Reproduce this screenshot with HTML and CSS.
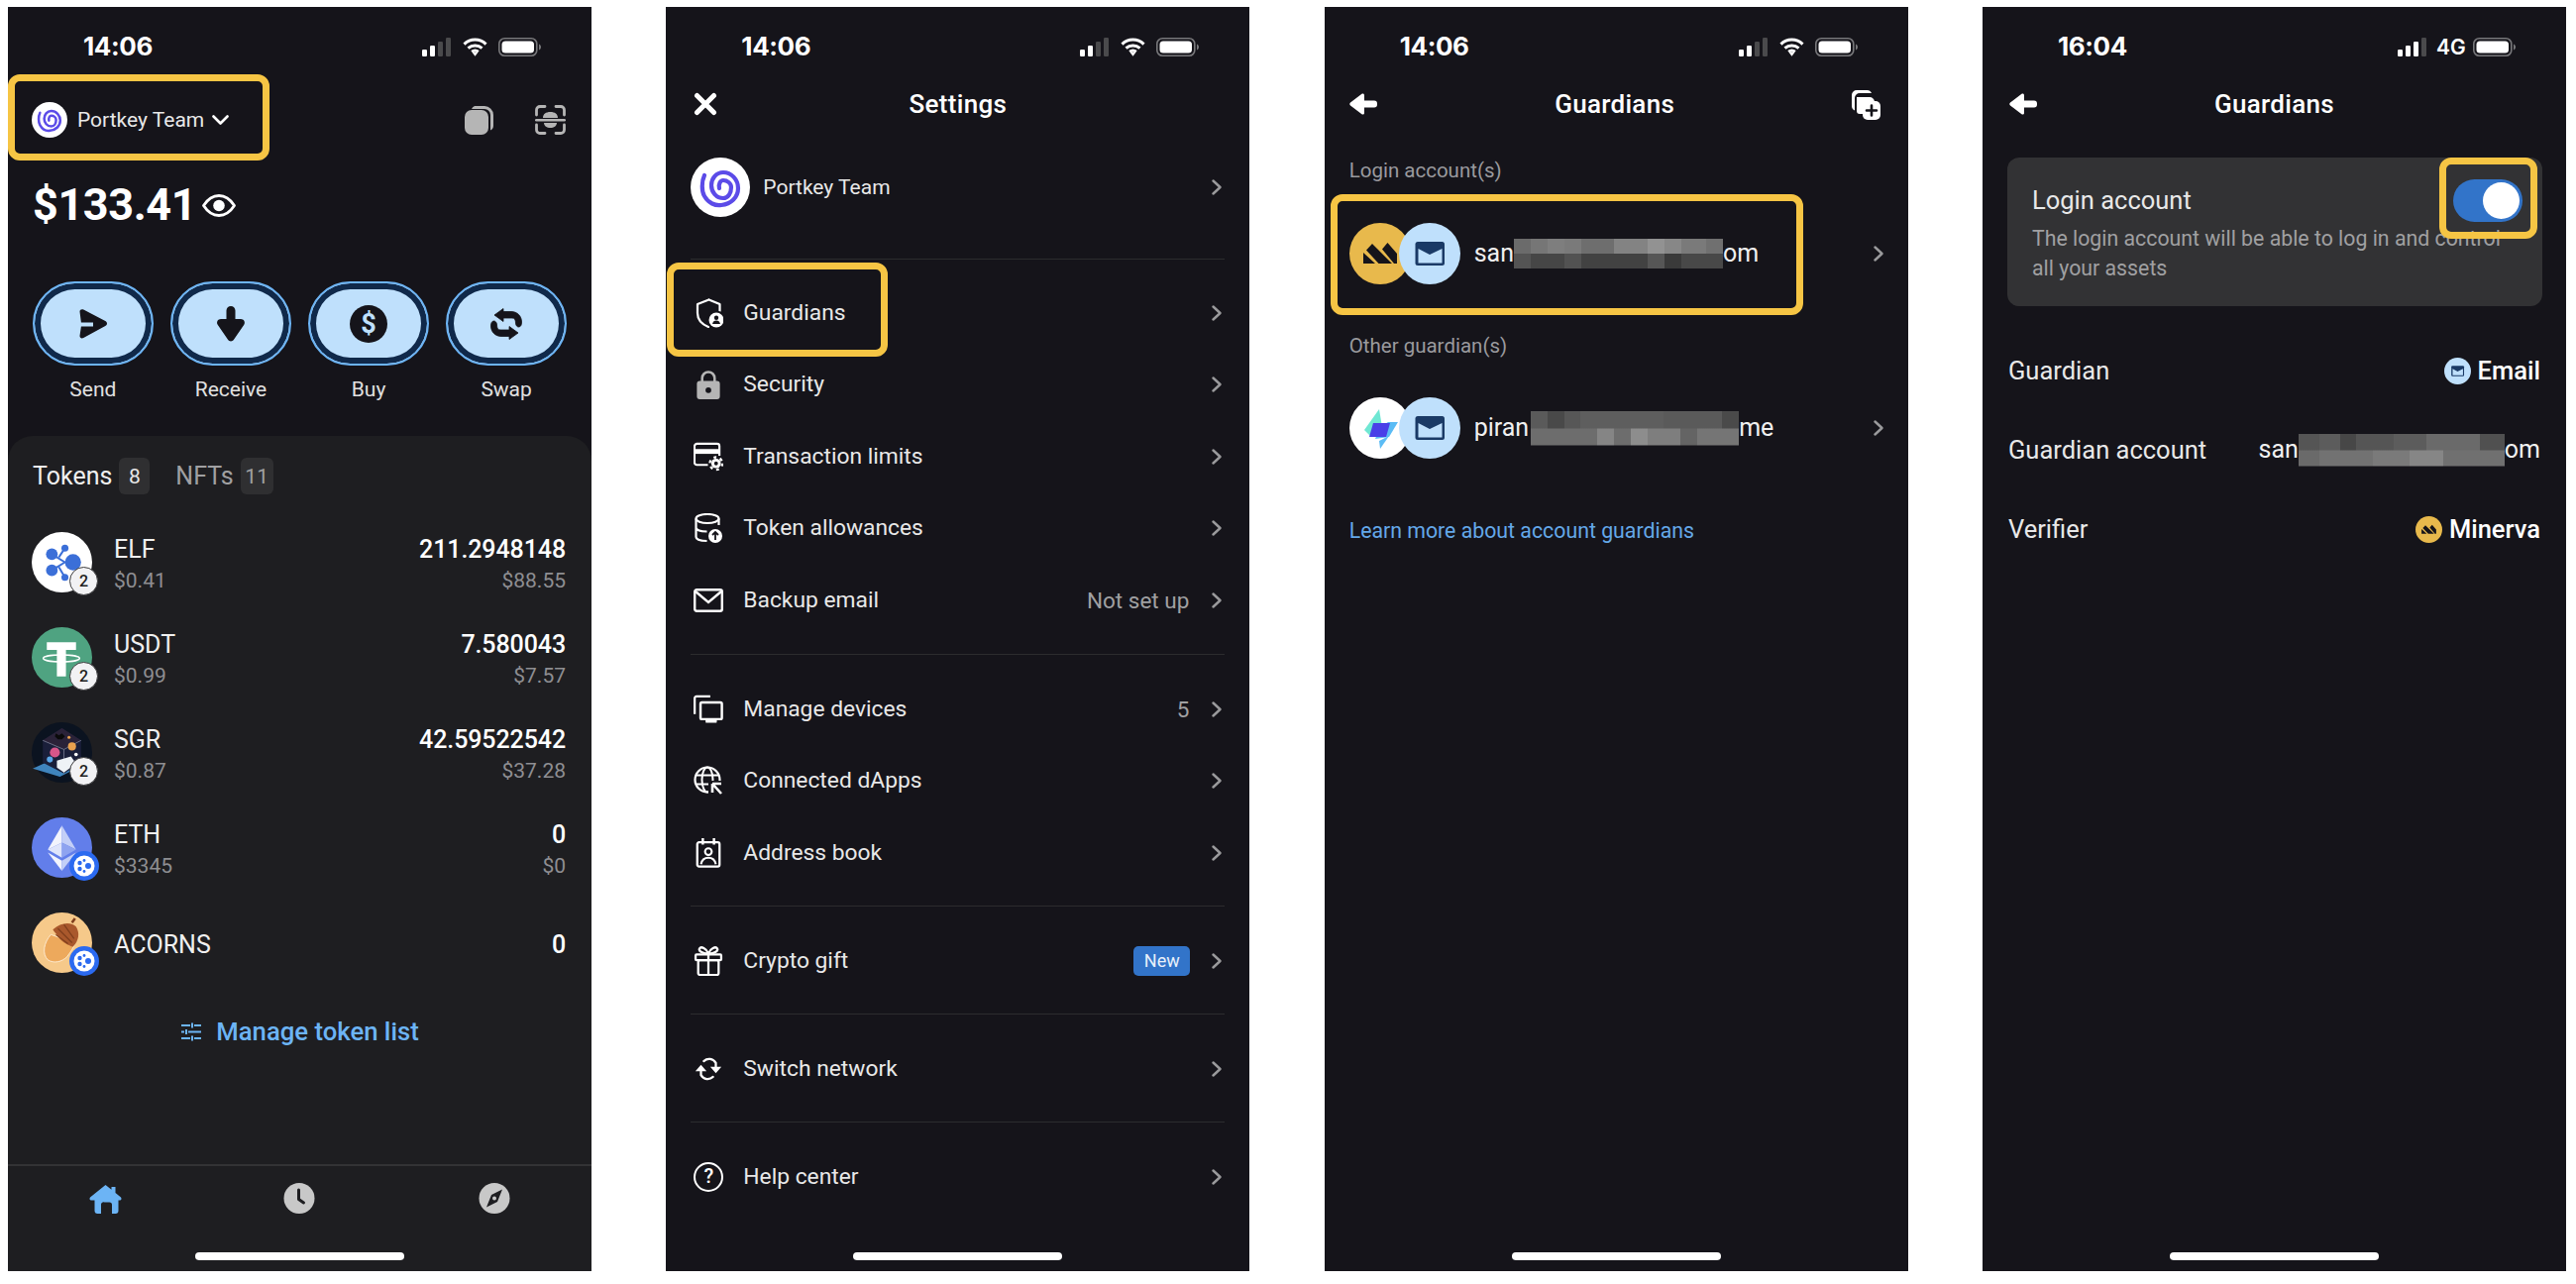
FILE: index.html
```html
<!DOCTYPE html>
<html lang="en">
<head>
<meta charset="utf-8">
<title>Portkey guardians walkthrough</title>
<link rel="stylesheet" href="styles.css">
</head>
<body>
<svg class="defs" aria-hidden="true">
  <symbol id="sig2" viewBox="0 0 29 19"><rect x="0" y="12" width="5" height="7" rx="1.2" fill="#fff"/><rect x="8" y="8" width="5" height="11" rx="1.2" fill="#fff"/><rect x="16" y="4" width="5" height="15" rx="1.2" fill="#4a4a4c"/><rect x="24" y="0" width="5" height="19" rx="1.2" fill="#4a4a4c"/></symbol>
  <symbol id="sig3" viewBox="0 0 29 19"><rect x="0" y="12" width="5" height="7" rx="1.2" fill="#fff"/><rect x="8" y="8" width="5" height="11" rx="1.2" fill="#fff"/><rect x="16" y="4" width="5" height="15" rx="1.2" fill="#fff"/><rect x="24" y="0" width="5" height="19" rx="1.2" fill="#4a4a4c"/></symbol>
  <symbol id="wifi" viewBox="0 0 25 19"><path d="M1.5 6.6C7.5 .6 17.5 .6 23.5 6.6M5.5 10.6c4-3.6 10-3.6 14 0M9.2 14.2c2-1.5 4.6-1.5 6.6 0" fill="none" stroke="#fff" stroke-width="3"/><path d="M9.8 15.2l2.7 3.5 2.7-3.5c-1.6-1.1-3.8-1.1-5.4 0z" fill="#fff"/></symbol>
  <symbol id="batt" viewBox="0 0 43 19"><rect x=".8" y=".8" width="38" height="17.4" rx="5.5" fill="none" stroke="#77777a" stroke-width="1.6"/><rect x="3.5" y="3.5" width="32.5" height="12" rx="3.5" fill="#fff"/><path d="M41 6.5c1.3.5 2 1.7 2 3s-.7 2.5-2 3z" fill="#77777a"/></symbol>
  <symbol id="spiral" viewBox="0 0 60 60"><circle cx="30" cy="30" r="30" fill="#fff"/><path d="M14 18C11 24 11 34 14 39C18 46 25 49 31 48C41 47 48 40 48 31C48 22 41 15 33 15C26 15 21 21 21 28C21 35 26 41 33 41C38 41 41 36 41 30C41 26 37 23 33 23C30 23 28 27 29 31" fill="none" stroke="#5b4be8" stroke-width="4.2" stroke-linecap="round"/></symbol>
  <symbol id="chevd" viewBox="0 0 17 10"><path d="M1.5 1.5L8.5 8.5 15.5 1.5" fill="none" stroke="#fff" stroke-width="2.6" stroke-linecap="round" stroke-linejoin="round"/></symbol>
  <symbol id="copy" viewBox="0 0 30 30"><path d="M10 1h10a9 9 0 0 1 9 9v11a5 5 0 0 1-3 4.500V10a6 6 0 0 0-6-6H7a5 5 0 0 1 3-3z" fill="#b5b5b5"/><rect x="0" y="5" width="24" height="25" rx="7" fill="#b5b5b5"/></symbol>
  <symbol id="scan" viewBox="0 0 31 30"><path d="M1.500 10V5a3.500 3.500 0 0 1 3.500-3.500h5M21 1.500h5A3.500 3.500 0 0 1 29.500 5v5M1.500 20v5A3.500 3.500 0 0 0 5 28.500h5M21 28.500h5a3.500 3.500 0 0 0 3.500-3.500v-5" fill="none" stroke="#b5b5b5" stroke-width="2.800" stroke-linecap="round"/><path d="M8 13c0-4 3-6 7.500-6s7.500 2 7.500 6zM9 18h13c0 3-3 5-6.500 5S9 21 9 18z" fill="#b5b5b5"/><rect x="0" y="14" width="31" height="2.600" rx="1.300" fill="#b5b5b5"/></symbol>
  <symbol id="eye" viewBox="0 0 34 23"><path d="M1.500 11.500C6 4.500 11 1.500 17 1.500s11 3 15.500 10C28 18.500 23 21.500 17 21.500S6 18.500 1.500 11.500z" fill="none" stroke="#fff" stroke-width="2.800" stroke-linejoin="round"/><circle cx="17" cy="11.500" r="5.800" fill="#fff"/></symbol>
  <symbol id="a-send" viewBox="0 0 32 32"><path d="M2.500 3.500c0-2 2-2.800 3.800-2l22 11.500c2.300 1.300 2.300 3.800 0 5L6.300 30c-2 1-3.800 0-3.800-2l1.400-9.500H16v-4H3.900z" fill="#15141a"/></symbol>
  <symbol id="a-recv" viewBox="0 0 30 36"><path d="M15 0c2.500 0 4.500 2 4.500 4.500V13h5.500c3 0 5 3 3.300 5.700L18 33.800c-1.500 2.200-4.500 2.200-6 0L1.700 18.700C0 16 2 13 5 13h5.500V4.500C10.500 2 12.500 0 15 0z" fill="#15141a"/></symbol>
  <symbol id="a-swap" viewBox="0 0 32 32"><path d="M13 .5L4 7l9 6.500V10h9c2.500 0 3.500 2 3.500 5 0 2.500 1.500 4 3 4 2 0 3-2 3-5C31.500 8 27 3.500 21 3.500h-8z" fill="#15141a" stroke="#15141a" stroke-width=".8" stroke-linejoin="round"/><path d="M13 .5L4 7l9 6.500V10h9c2.500 0 3.500 2 3.500 5 0 2.500 1.500 4 3 4 2 0 3-2 3-5C31.500 8 27 3.500 21 3.500h-8z" fill="#15141a" stroke="#15141a" stroke-width=".8" stroke-linejoin="round" transform="rotate(180 16 16)"/></symbol>
  <symbol id="t-elf" viewBox="0 0 60 60"><circle cx="30" cy="30" r="30" fill="#fff"/><path d="M20 22L33 30M20 38L33 30M33 30H41M33 16L27 25M33 45L27 35" stroke="#3b6fd8" stroke-width="2" fill="none"/><circle cx="41" cy="30" r="8" fill="#3b6fd8"/><circle cx="20" cy="22" r="5.800" fill="#3b6fd8"/><circle cx="20" cy="38" r="5.800" fill="#3b6fd8"/><circle cx="33" cy="16" r="3.500" fill="#3b6fd8"/><circle cx="33" cy="45" r="3.500" fill="#3b6fd8"/></symbol>
  <symbol id="t-usdt" viewBox="0 0 60 60"><circle cx="30" cy="30" r="30" fill="#4fa381"/><path d="M15 15h29v7.500H34V49h-9V22.500H15z" fill="#fff"/><ellipse cx="29.500" cy="31" rx="18" ry="3.400" fill="none" stroke="#fff" stroke-width="1.500"/></symbol>
  <symbol id="t-sgr" viewBox="0 0 60 60"><circle cx="30" cy="30" r="30" fill="#0b1320"/><path d="M1 46l20-9 23 9-16 8z" fill="#3f84bd"/><path d="M11 18L30 6l19 12v22L32 51 11 40z" fill="#1a1f3a"/><path d="M30 6l19 12-17 9-21-9z" fill="#2a2238"/><path d="M32 27v24M11 18l21 9 17-9" fill="none" stroke="#7a7f95" stroke-width=".8"/><circle cx="23" cy="30" r="5" fill="#d8568a"/><circle cx="40" cy="24" r="4" fill="#e9a14e"/><circle cx="18" cy="37" r="3" fill="#5aa6e8"/><circle cx="44" cy="32" r="1.800" fill="#fff"/><circle cx="37" cy="15" r="1.500" fill="#e9a14e"/><path d="M25 38l14-4 5 7-12 9-7-5z" fill="#eef2f6"/><path d="M24 11l3 2 3-2 3 3-3 3h-4l-3-3z" fill="#0a0a0a"/></symbol>
  <symbol id="t-eth" viewBox="0 0 60 60"><circle cx="30" cy="30" r="30" fill="#627eea"/><path d="M30 8v17l-14 7z" fill="#f2f4fd"/><path d="M30 8v17l14 7z" fill="#c3cff7"/><path d="M30 25l-14 7 14 8z" fill="#dfe5fb"/><path d="M30 25l14 7-14 8z" fill="#8ea3f0"/><path d="M16 35l14 8v10z" fill="#f2f4fd"/><path d="M44 35l-14 8v10z" fill="#c3cff7"/></symbol>
  <symbol id="t-acorn" viewBox="0 0 60 60"><circle cx="30" cy="30" r="30" fill="#f6c98a"/><path d="M19 22c-7 8-9 19-3 25 6 4 14 2 19-3 4-5 7-10 8-14z" fill="#eda95c" stroke="#fff3e0" stroke-width=".8"/><path d="M21 17c8-7 17-8 23-3 4 6 3 14-3 20-4-1-11-5-14-9-2-3-4-5-6-8z" fill="#a9582c"/><path d="M26 16l14 14M32 12l10 14M24 22l12 9" stroke="#7f3e1c" stroke-width="1.200"/><path d="M40 10l3-4" stroke="#7f3e1c" stroke-width="2.500"/></symbol>
  <symbol id="t-chain" viewBox="0 0 30 30"><circle cx="15" cy="15" r="15" fill="#2b6af0"/><circle cx="15" cy="15" r="10.500" fill="#fff"/><g fill="#2b6af0"><circle cx="19" cy="15" r="3"/><circle cx="10.500" cy="12" r="2.200"/><circle cx="10.500" cy="18" r="2.200"/><circle cx="15" cy="9.500" r="1.400"/><circle cx="15" cy="20.500" r="1.400"/></g></symbol>
  <symbol id="tune" viewBox="0 0 20 19"><path d="M0 3h9M13 3h7M0 9.500h3M7 9.500h13M0 16h9M13 16h7M11 .5v5M5 7v5M11 13.500v5" stroke="#6cb4f5" stroke-width="2" fill="none"/></symbol>
  <symbol id="home" viewBox="0 0 33 29"><path d="M16.500 0l6 4.800V2h4v6l5.500 4.500c1 1 .5 3-1 3h-1.500V26a3 3 0 0 1-3 3h-3.500V20a2.500 2.500 0 0 0-2.500-2.500h-5A2.500 2.500 0 0 0 12 20v9H8.500a3 3 0 0 1-3-3V15.500H2c-1.500 0-2-2-1-3z" fill="#6cb4f5"/></symbol>
  <symbol id="clock" viewBox="0 0 31 31"><circle cx="15.500" cy="15.500" r="15.500" fill="#c8c8c8"/><path d="M15 7v9.500l5 3.500" fill="none" stroke="#1e1e21" stroke-width="3" stroke-linecap="round" stroke-linejoin="round"/></symbol>
  <symbol id="compass" viewBox="0 0 32 31"><circle cx="16" cy="15.500" r="15.500" fill="#c8c8c8"/><path d="M24 6.500L19 19 8 24.500l5-12.500z" fill="#1e1e21"/><circle cx="16" cy="15.500" r="2" fill="#c8c8c8"/></symbol>
  <symbol id="close" viewBox="0 0 24 24"><path d="M3.500 3.500l17 17M20.500 3.500l-17 17" stroke="#fff" stroke-width="5" stroke-linecap="round"/></symbol>
  <symbol id="back" viewBox="0 0 28 22"><path d="M12.500.8c1-.8 2.500-.2 2.500 1.200v5.500h10a3 3 0 0 1 3 3v1a3 3 0 0 1-3 3H15V20c0 1.400-1.500 2-2.500 1.200L1 12.500c-1-.8-1-2.200 0-3z" fill="#fff"/></symbol>
  <symbol id="add" viewBox="0 0 30 31"><path d="M16 1H6a5 5 0 0 0-5 5v11a5 5 0 0 0 3 4.500V9a5 5 0 0 1 5-5h12a5 5 0 0 0-5-3z" fill="#fff"/><path d="M6 8h13a5 5 0 0 1 5 5v0h-4c-5 0-8 3-8 8v4H9a3 3 0 0 1-3-3z" fill="#fff"/><rect x="12" y="12" width="18" height="19" rx="5" fill="#fff"/><path d="M21 16.500v10M16 21.500h10" stroke="#15141a" stroke-width="2.600" stroke-linecap="round"/></symbol>
  <symbol id="chev" viewBox="0 0 10 16"><path d="M1.500 1.500L8.500 8 1.500 14.500" fill="none" stroke="#9a9a9c" stroke-width="2.400" stroke-linecap="round" stroke-linejoin="round"/></symbol>
  <symbol id="i-guard" viewBox="0 0 30 30"><path d="M15.500 1.500L4 6v9c0 7 5 11.500 11 14M15.500 1.500L26.500 6v7" fill="none" stroke="#fff" stroke-width="2.200" stroke-linejoin="round" stroke-linecap="round"/><circle cx="23" cy="22" r="9.500" fill="#15141a"/><circle cx="23" cy="22" r="7.500" fill="#fff"/><circle cx="23" cy="19.800" r="2.200" fill="#15141a"/><path d="M19 26c.5-2.500 2-3.500 4-3.500s3.500 1 4 3.500z" fill="#15141a"/></symbol>
  <symbol id="i-lock" viewBox="0 0 30 31"><path d="M8.500 14V9a6.500 6.500 0 0 1 13 0v5" fill="none" stroke="#b5b5b5" stroke-width="2.600"/><rect x="3" y="12" width="24" height="19" rx="3" fill="#b5b5b5"/><circle cx="15" cy="21.500" r="3" fill="#15141a"/></symbol>
  <symbol id="i-card" viewBox="0 0 31 30"><path d="M3.500 1.500h21A2.500 2.500 0 0 1 27 4v19.500H3.500A2.500 2.500 0 0 1 1 21V4a2.500 2.500 0 0 1 2.500-2.500z" fill="none" stroke="#fff" stroke-width="2.200"/><rect x="1" y="7" width="26" height="5" fill="#fff"/><rect x="15" y="14" width="16" height="16" fill="#15141a"/><circle cx="23.500" cy="22" r="5" fill="#fff"/><circle cx="23.500" cy="22" r="6.500" fill="none" stroke="#fff" stroke-width="2.400" stroke-dasharray="3 3.810"/><circle cx="23.500" cy="22" r="2" fill="#15141a"/></symbol>
  <symbol id="i-db" viewBox="0 0 30 30"><ellipse cx="14" cy="5.500" rx="11.500" ry="4.500" fill="none" stroke="#fff" stroke-width="2.200"/><path d="M2.500 5.500V24c0 2.500 5 4 11 4M25.500 5.500V12M2.500 14.500c0 2.500 5 4 11 4" fill="none" stroke="#fff" stroke-width="2.200"/><circle cx="22" cy="23" r="7" fill="#fff"/><path d="M22 27v-7.500M19 22l3-3 3 3" fill="none" stroke="#15141a" stroke-width="1.800"/></symbol>
  <symbol id="i-mail" viewBox="0 0 30 24"><rect x="1.200" y="1.200" width="27.600" height="21.600" rx="2" fill="none" stroke="#fff" stroke-width="2.400"/><path d="M2 3l13 11L28 3" fill="none" stroke="#fff" stroke-width="2.400"/></symbol>
  <symbol id="i-dev" viewBox="0 0 32 30"><path d="M1.200 20V3a2 2 0 0 1 2-2H18" fill="none" stroke="#fff" stroke-width="2.400"/><rect x="7.500" y="7.500" width="23" height="18" rx="1.500" fill="none" stroke="#fff" stroke-width="2.600"/><rect x="13" y="26" width="12" height="3.500" rx="1" fill="#fff"/></symbol>
  <symbol id="i-globe" viewBox="0 0 30 30"><circle cx="14" cy="14" r="12.500" fill="none" stroke="#fff" stroke-width="2.200"/><ellipse cx="14" cy="14" rx="5.500" ry="12.500" fill="none" stroke="#fff" stroke-width="2"/><path d="M2 9.500h24M2 18.500h24" stroke="#fff" stroke-width="2"/><rect x="15" y="15" width="15" height="15" fill="#15141a"/><path d="M19 18h9M19 18v9M19 18l9 10" fill="none" stroke="#fff" stroke-width="2.600"/></symbol>
  <symbol id="i-book" viewBox="0 0 30 32"><rect x="3" y="4.500" width="24" height="26" rx="2" fill="none" stroke="#fff" stroke-width="2.400"/><path d="M9 0v7M21 0v7" stroke="#fff" stroke-width="2.600"/><circle cx="15" cy="14.500" r="3.600" fill="none" stroke="#fff" stroke-width="2.200"/><path d="M7 28c1-5 4-7 8-7s7 2 8 7" fill="none" stroke="#fff" stroke-width="2.200"/></symbol>
  <symbol id="i-gift" viewBox="0 0 30 32"><rect x="1.200" y="9" width="27.600" height="6" rx="1" fill="none" stroke="#fff" stroke-width="2.400"/><rect x="4" y="15" width="22" height="16" rx="2" fill="none" stroke="#fff" stroke-width="2.400"/><path d="M15 9v22" stroke="#fff" stroke-width="2.400"/><path d="M15 8c-2-6-8-8-9.500-5.500C4 5 8 8 15 8zM15 8c2-6 8-8 9.500-5.500C26 5 22 8 15 8z" fill="none" stroke="#fff" stroke-width="2.400"/></symbol>
  <symbol id="i-sync" viewBox="0 0 32 25"><path d="M11 4C15 .5 21 1 24 6v4M21 21c-4 3.500-10 3-13-2v-4" fill="none" stroke="#fff" stroke-width="2.400" stroke-linecap="round"/><path d="M18 10h12l-6 7zM2 15h12L8 8z" fill="#fff"/></symbol>
  <symbol id="g-mine" viewBox="0 0 62 62"><circle cx="31" cy="31" r="31" fill="#e8b94c"/><path d="M14 30v11h12zM23 21l-6 6.500L29.500 41H43zM33 26.500L38.500 20 48 31v10h-3z" fill="#15141a"/></symbol>
  <symbol id="g-mail" viewBox="0 0 62 62"><circle cx="31" cy="31" r="31" fill="#bfe0fc"/><rect x="16.500" y="19" width="29.500" height="24" rx="2.500" fill="#1a3a66"/><path d="M19.500 26L31 32l12.500-6v14.500h-24z" fill="#bfe0fc"/></symbol>
  <symbol id="g-bolt" viewBox="0 0 62 62"><circle cx="31" cy="31" r="31" fill="#fff"/><path d="M30 12L15 33l6 6 12-9z" fill="#6fe7d3"/><path d="M39 25h10L40 40l-14 2 5-12z" fill="#5bbcf5"/><path d="M24 26h17l-4 14H20z" fill="#4a3fe8"/><path d="M30 44l10-5-9 13z" fill="#5bbcf5"/></symbol>
</svg>

<main class="board">

<section class="phone">
  <div class="status"><span class="clock">14:06</span><span class="status-icons"><svg class="s-sig"><use href="#sig2"/></svg><svg class="s-wifi"><use href="#wifi"/></svg><svg class="s-batt"><use href="#batt"/></svg></span></div>
  <header class="wallet-head">
    <svg class="wallet-ava"><use href="#spiral"/></svg>
    <span class="wallet-name">Portkey Team</span>
    <svg class="wallet-chev"><use href="#chevd"/></svg>
    <span class="grow"></span>
    <svg class="ic-30"><use href="#copy"/></svg>
    <svg class="ic-scan"><use href="#scan"/></svg>
  </header>
  <div class="balance"><span>$133.41</span><svg class="eye"><use href="#eye"/></svg></div>
  <div class="actions">
    <div class="action"><div class="action-btn"><svg class="a1"><use href="#a-send"/></svg></div><span>Send</span></div>
    <div class="action"><div class="action-btn"><svg class="a2"><use href="#a-recv"/></svg></div><span>Receive</span></div>
    <div class="action"><div class="action-btn"><span class="a3">$</span></div><span>Buy</span></div>
    <div class="action"><div class="action-btn"><svg class="a4"><use href="#a-swap"/></svg></div><span>Swap</span></div>
  </div>
  <div class="assets">
    <div class="tabs">
      <span class="tab on">Tokens</span><span class="count on">8</span>
      <span class="tab off">NFTs</span><span class="count wide">11</span>
    </div>
    <div class="token"><div class="t-icon"><svg><use href="#t-elf"/></svg><span class="t-num">2</span></div><div class="t-col"><span class="t-main">ELF</span><span class="t-sub">$0.41</span></div><div class="t-col right"><span class="t-main strong">211.2948148</span><span class="t-sub">$88.55</span></div></div>
    <div class="token"><div class="t-icon"><svg><use href="#t-usdt"/></svg><span class="t-num">2</span></div><div class="t-col"><span class="t-main">USDT</span><span class="t-sub">$0.99</span></div><div class="t-col right"><span class="t-main strong">7.580043</span><span class="t-sub">$7.57</span></div></div>
    <div class="token"><div class="t-icon"><svg><use href="#t-sgr"/></svg><span class="t-num">2</span></div><div class="t-col"><span class="t-main">SGR</span><span class="t-sub">$0.87</span></div><div class="t-col right"><span class="t-main strong">42.59522542</span><span class="t-sub">$37.28</span></div></div>
    <div class="token"><div class="t-icon"><svg><use href="#t-eth"/></svg><svg class="t-chain"><use href="#t-chain"/></svg></div><div class="t-col"><span class="t-main">ETH</span><span class="t-sub">$3345</span></div><div class="t-col right"><span class="t-main strong">0</span><span class="t-sub">$0</span></div></div>
    <div class="token"><div class="t-icon"><svg><use href="#t-acorn"/></svg><svg class="t-chain"><use href="#t-chain"/></svg></div><div class="t-col"><span class="t-main">ACORNS</span></div><div class="t-col right"><span class="t-main strong">0</span></div></div>
    <div class="manage"><svg class="tune"><use href="#tune"/></svg><span>Manage token list</span></div>
    <nav class="tabbar">
      <svg class="nav-home"><use href="#home"/></svg>
      <svg class="nav-ic"><use href="#clock"/></svg>
      <svg class="nav-ic"><use href="#compass"/></svg>
    </nav>
  </div>
  <div class="hl hl-1"></div>
  <div class="indicator"></div>
</section>

<section class="phone">
  <div class="status"><span class="clock">14:06</span><span class="status-icons"><svg class="s-sig"><use href="#sig2"/></svg><svg class="s-wifi"><use href="#wifi"/></svg><svg class="s-batt"><use href="#batt"/></svg></span></div>
  <header class="nav nav-settings"><svg class="nav-close"><use href="#close"/></svg><h1>Settings</h1><span></span></header>
  <div class="profile"><svg class="profile-ava"><use href="#spiral"/></svg><span class="profile-name">Portkey Team</span><svg class="chev"><use href="#chev"/></svg></div>
  <div class="group">
    <div class="row"><svg class="ic"><use href="#i-guard"/></svg><span class="row-t">Guardians</span><svg class="chev"><use href="#chev"/></svg></div>
    <div class="row"><svg class="ic"><use href="#i-lock"/></svg><span class="row-t">Security</span><svg class="chev"><use href="#chev"/></svg></div>
    <div class="row"><svg class="ic"><use href="#i-card"/></svg><span class="row-t">Transaction limits</span><svg class="chev"><use href="#chev"/></svg></div>
    <div class="row"><svg class="ic"><use href="#i-db"/></svg><span class="row-t">Token allowances</span><svg class="chev"><use href="#chev"/></svg></div>
    <div class="row"><svg class="ic"><use href="#i-mail"/></svg><span class="row-t">Backup email</span><span class="row-v">Not set up</span><svg class="chev"><use href="#chev"/></svg></div>
  </div>
  <div class="group">
    <div class="row"><svg class="ic"><use href="#i-dev"/></svg><span class="row-t">Manage devices</span><span class="row-v">5</span><svg class="chev"><use href="#chev"/></svg></div>
    <div class="row"><svg class="ic"><use href="#i-globe"/></svg><span class="row-t">Connected dApps</span><svg class="chev"><use href="#chev"/></svg></div>
    <div class="row"><svg class="ic"><use href="#i-book"/></svg><span class="row-t">Address book</span><svg class="chev"><use href="#chev"/></svg></div>
  </div>
  <div class="group">
    <div class="row"><svg class="ic"><use href="#i-gift"/></svg><span class="row-t">Crypto gift</span><span class="row-new">New</span><svg class="chev"><use href="#chev"/></svg></div>
  </div>
  <div class="group">
    <div class="row"><svg class="ic"><use href="#i-sync"/></svg><span class="row-t">Switch network</span><svg class="chev"><use href="#chev"/></svg></div>
  </div>
  <div class="group last">
    <div class="row"><span class="ic ic-help">?</span><span class="row-t">Help center</span><svg class="chev"><use href="#chev"/></svg></div>
  </div>
  <div class="hl hl-2"></div>
  <div class="indicator"></div>
</section>

<section class="phone">
  <div class="status"><span class="clock">14:06</span><span class="status-icons"><svg class="s-sig"><use href="#sig2"/></svg><svg class="s-wifi"><use href="#wifi"/></svg><svg class="s-batt"><use href="#batt"/></svg></span></div>
  <header class="nav nav-guard"><svg class="nav-back"><use href="#back"/></svg><h1>Guardians</h1><svg class="nav-add"><use href="#add"/></svg></header>
  <div class="g-label first">Login account(s)</div>
  <div class="g-row"><div class="g-pair"><svg class="g-a"><use href="#g-mine"/></svg><svg class="g-b"><use href="#g-mail"/></svg></div><span class="g-acct"><span>san</span><span class="pix pix-a"></span><span>om</span></span><svg class="chev"><use href="#chev"/></svg></div>
  <div class="g-label second">Other guardian(s)</div>
  <div class="g-row"><div class="g-pair"><svg class="g-a"><use href="#g-bolt"/></svg><svg class="g-b"><use href="#g-mail"/></svg></div><span class="g-acct"><span>piran</span><span class="pix pix-b"></span><span>me</span></span><svg class="chev"><use href="#chev"/></svg></div>
  <div class="g-link">Learn more about account guardians</div>
  <div class="hl hl-3"></div>
  <div class="indicator"></div>
</section>

<section class="phone">
  <div class="status"><span class="clock">16:04</span><span class="status-icons"><svg class="s-sig"><use href="#sig3"/></svg><span class="s-net">4G</span><svg class="s-batt"><use href="#batt"/></svg></span></div>
  <header class="nav nav-detail"><svg class="nav-back"><use href="#back"/></svg><h1>Guardians</h1><span></span></header>
  <div class="login-card">
    <div class="login-head"><span>Login account</span><div class="toggle"><span class="knob"></span></div></div>
    <p>The login account will be able to log in and control all your assets</p>
  </div>
  <div class="d-row"><span class="d-k">Guardian</span><span class="d-v"><svg class="d-ic"><use href="#g-mail"/></svg>Email</span></div>
  <div class="d-row"><span class="d-k">Guardian account</span><span class="g-acct d-acct"><span>san</span><span class="pix pix-c"></span><span>om</span></span></div>
  <div class="d-row"><span class="d-k">Verifier</span><span class="d-v"><svg class="d-ic"><use href="#g-mine"/></svg>Minerva</span></div>
  <div class="hl hl-4"></div>
  <div class="indicator"></div>
</section>

</main>
</body>
</html>
```

FILE: styles.css
```css
* { box-sizing: border-box; }
html, body { margin: 0; padding: 0; background: #fff; }
body { width: 2600px; height: 1296px; overflow: hidden; font-family: Roboto, "Liberation Sans", sans-serif; color: #fff; }
.defs { position: absolute; width: 0; height: 0; overflow: hidden; }
svg { display: block; flex: none; }

.board { display: flex; gap: 75.33px; padding: 7px 0 0 8px; }
.phone { position: relative; width: 589px; height: 1276px; flex: none; display: flex; flex-direction: column; background: #15141a; overflow: hidden; }

/* status bar */
.status { height: 80px; display: flex; align-items: center; justify-content: space-between; padding: 0 51px 0 76px; flex: none; }
.clock { font-family: Inter, sans-serif; font-weight: 700; font-size: 26px; line-height: 30px; letter-spacing: -.4px; }
.status-icons { display: flex; align-items: center; }
.s-sig { width: 29px; height: 19px; margin-right: 12px; }
.s-wifi { width: 25px; height: 19px; margin-right: 11px; }
.s-batt { width: 43px; height: 19px; }
.s-net { font-family: Inter, sans-serif; font-size: 21px; font-weight: 600; width: 27px; margin-right: 10px; line-height: 19px; margin-left: -2px; }

/* annotation frames */
.hl { position: absolute; border: 7px solid #f6c544; border-radius: 12px; pointer-events: none; }
.hl-1 { left: 0; top: 68px; width: 264px; height: 87px; }
.hl-2 { left: 1px; top: 258px; width: 223px; height: 95px; }
.hl-3 { left: 6px; top: 189px; width: 477px; height: 122px; }
.hl-4 { left: 461px; top: 152px; width: 99px; height: 82px; }

.indicator { position: absolute; left: 189px; bottom: 11px; width: 211px; height: 8px; border-radius: 4px; background: #fff; }

/* wallet */
.wallet-head { height: 68px; flex: none; display: flex; align-items: center; padding: 0 26px 0 24px; }
.wallet-ava { width: 36px; height: 36px; margin-right: 10px; }
.wallet-name { font-size: 21px; color: #e8e8e8; line-height: 28px; }
.wallet-chev { width: 17px; height: 10px; margin-left: 8px; }
.grow { flex: 1; }
.ic-30 { width: 30px; height: 30px; }
.ic-scan { width: 31px; height: 30px; margin-left: 41px; }
.balance { height: 60px; margin-top: 22px; padding-left: 25px; display: flex; align-items: center; flex: none; font-size: 45px; font-weight: 700; letter-spacing: -.4px; line-height: 60px; }
.eye { width: 34px; height: 23px; margin-left: 6px; }
.actions { display: grid; grid-template-columns: repeat(4, 1fr); column-gap: 17.330px; padding: 0 25px; margin-top: 47px; flex: none; }
.action { display: flex; flex-direction: column; align-items: center; gap: 12px; font-size: 21px; line-height: 24px; color: #e0e0e0; }
.action-btn { width: 100%; height: 85px; border-radius: 43px; background: #bfe0fc; border: 2px solid #6cb4f5; box-shadow: inset 0 0 0 6px #10294a; display: flex; align-items: center; justify-content: center; }
.a1 { width: 32px; height: 32px; }
.a2 { width: 30px; height: 36px; }
.a3 { width: 38px; height: 38px; border-radius: 50%; background: #15141a; color: #bfe0fc; font-size: 27px; font-weight: 700; line-height: 38px; text-align: center; }
.a4 { width: 32px; height: 32px; }

.assets { flex: 1; margin-top: 35px; background: #1e1e21; border-radius: 25px 25px 0 0; padding-top: 22px; display: flex; flex-direction: column; min-height: 0; }
.tabs { display: flex; align-items: center; height: 37px; padding-left: 25px; margin-bottom: 20px; flex: none; }
.tab { font-size: 25px; line-height: 30px; padding-top: 1px; }
.tab.on { color: #f0f0f0; }
.tab.off { color: #a0a0a2; margin-left: 26px; }
.count { margin-left: 7px; width: 31px; height: 37px; border-radius: 6px; background: #2f2f31; color: #a0a0a2; font-size: 21px; display: flex; align-items: center; justify-content: center; }
.count.on { color: #e8e8e8; }
.count.wide { width: 33px; }

.token { height: 96px; flex: none; display: flex; align-items: center; padding: 0 26px 0 24px; }
.t-icon { position: relative; width: 61px; height: 61px; margin-right: 22px; flex: none; }
.t-icon > svg:first-child { width: 61px; height: 61px; }
.t-num { position: absolute; left: 38px; top: 35px; width: 29px; height: 29px; border-radius: 50%; background: #f2f2f4; border: 1.500px solid #3a3a3c; color: #1e1e21; font-size: 16px; font-weight: 500; display: flex; align-items: center; justify-content: center; }
.t-chain { position: absolute; left: 38px; top: 34px; width: 30px; height: 30px; }
.t-col { display: flex; flex-direction: column; justify-content: center; flex: 1; gap: 4px; padding-top: 5px; }
.t-col.right { align-items: flex-end; }
.t-main { font-size: 25px; line-height: 28px; color: #f0f0f0; }
.t-main.strong { font-size: 25px; font-weight: 500; color: #fff; letter-spacing: -.1px; }
.t-sub { font-size: 21px; line-height: 26px; color: #8e8e92; }

.manage { display: flex; align-items: center; justify-content: center; height: 30px; margin-top: 27px; padding-left: 1px; color: #6cb4f5; font-size: 25.700px; font-weight: 500; flex: none; }
.tune { width: 20px; height: 19px; margin-right: 15px; }
.tabbar { margin-top: auto; height: 108px; flex: none; border-top: 2px solid #333335; display: grid; grid-template-columns: repeat(3, 1fr); justify-items: center; align-items: start; padding-top: 17px; }
.nav-home { width: 33px; height: 29px; margin-top: 2px; }
.nav-ic { width: 32px; height: 31px; }

/* nav bars */
.nav { height: 36px; flex: none; display: grid; grid-template-columns: 1fr auto 1fr; align-items: center; }
.nav h1 { margin: 0; font-size: 26px; font-weight: 500; letter-spacing: .3px; line-height: 36px; color: #fff; }
.nav-settings { padding: 0 28px; }
.nav-guard { padding: 0 28px 0 25px; }
.nav-detail { padding: 0 27px; }
.nav-close { width: 24px; height: 24px; }
.nav-back { width: 28px; height: 22px; }
.nav-add { width: 30px; height: 31px; justify-self: end; }

/* settings */
.profile { display: flex; align-items: center; height: 61px; margin-top: 35px; padding: 0 28px 0 25px; flex: none; }
.profile-ava { width: 60px; height: 60px; margin-right: 13px; }
.profile-name { flex: 1; font-size: 21px; color: #e8e8e8; }
.chev { width: 10px; height: 16px; }
.group { margin: 0 25px; padding: 19px 0 16.500px; flex: none; border-bottom: 1px solid #2c2c2e; }
.profile + .group { margin-top: 41.500px; border-top: 1px solid #2c2c2e; padding: 18px 0 17.500px; }
.group.last { border-bottom: 0; }
.row { height: 72.500px; display: flex; align-items: center; padding: 0 3px; }
.ic { width: 30px; height: 30px; margin-right: 20px; }
.ic-help { border: 2.400px solid #fff; border-radius: 50%; color: #fff; font-size: 20px; font-weight: 500; line-height: 25px; text-align: center; flex: none; }
.row-t { flex: 1; font-size: 22.800px; color: #e8e8e8; line-height: 30px; }
.row-v { font-size: 22.500px; color: #a0a0a2; margin-right: 23px; }
.row-new { width: 57px; height: 30px; border-radius: 5px; background: #3274c9; color: #e8f0fa; font-size: 18px; display: flex; align-items: center; justify-content: center; margin-right: 22px; }

/* guardians */
.g-label { padding-left: 25px; font-size: 20.500px; line-height: 28px; color: #9a9a9e; flex: none; }
.g-label.first { margin-top: 35px; }
.g-label.second { margin-top: 31px; }
.g-row { display: flex; align-items: center; height: 96px; padding: 0 25px; flex: none; margin-top: 22px; }
.g-label.second + .g-row { margin-top: 21px; }
.g-pair { position: relative; width: 112px; height: 62px; margin-right: 14px; flex: none; }
.g-a, .g-b { width: 62px; height: 62px; }
.g-b { position: absolute; left: 50px; top: 0; }
.g-acct { display: flex; align-items: center; flex: 1; font-size: 25px; color: #f0f0f0; line-height: 30px; }
.g-row .chev { margin-left: auto; }
.pix { display: block; flex: none; background-repeat: no-repeat; background-size: 100% 50%; background-position: top, bottom; }
.pix-a { width: 211px; height: 30px; background-image:
  linear-gradient(90deg, #6b6b6b 0 8%, #767676 8% 16%, #7e7e7e 16% 24%, #7a7a7a 24% 32%, #6e6e6e 32% 48%, #838383 48% 64%, #929292 64% 72%, #878787 72% 80%, #7a7a7a 80% 92%, #707070 92%),
  linear-gradient(90deg, #545454 0 8%, #464646 8% 24%, #525252 24% 32%, #424242 32% 64%, #565656 64% 72%, #3a3a3a 72% 80%, #484848 80%); }
.pix-b { width: 210px; height: 35px; margin-left: 2px; background-image:
  linear-gradient(90deg, #5a5a5a 0 8%, #494949 8% 16%, #575757 16% 24%, #5e5e5e 24% 64%, #5a5a5a 64% 92%, #4a4a4a 92%),
  linear-gradient(90deg, #6d6d6d 0 32%, #858585 32% 40%, #6d6d6d 40% 48%, #8d8d8d 48% 56%, #7e7e7e 56% 72%, #646464 72% 80%, #757575 80%); }
.pix-c { width: 208px; height: 33px; background-image:
  linear-gradient(90deg, #555 0 10%, #5c5c5c 10% 20%, #474747 20% 28%, #555 28% 46%, #5c5c5c 46% 62%, #6a6a6a 62% 88%, #505050 88%),
  linear-gradient(90deg, #6a6a6a 0 10%, #727272 10% 36%, #7a7a7a 36% 54%, #868686 54% 70%, #707070 70%); }
.g-link { padding-left: 25px; margin-top: 42px; font-size: 21.300px; line-height: 28px; color: #64a8e8; flex: none; }

/* detail */
.login-card { margin: 36px 24px 0 25px; height: 150px; border-radius: 12px; background: #323234; padding: 28px 20px 0 25px; flex: none; }
.login-head { height: 30px; display: flex; align-items: center; justify-content: space-between; font-size: 25.500px; color: #e8e8e8; }
.login-card p { margin: 9px 0 0; font-size: 21.300px; line-height: 30px; color: #a0a0a2; }
.toggle { width: 70px; height: 43px; border-radius: 22px; background: #3274c9; padding: 3px; display: flex; justify-content: flex-end; flex: none; }
.knob { width: 37px; height: 37px; border-radius: 50%; background: #fff; }
.d-row { height: 80px; display: flex; align-items: center; justify-content: space-between; padding: 0 26px; flex: none; }
.login-card + .d-row { margin-top: 25px; }
.d-k { font-size: 25.500px; color: #e8e8e8; }
.d-v { display: flex; align-items: center; font-size: 25.500px; font-weight: 500; gap: 7px; }
.d-ic { width: 27px; height: 27px; }
.d-acct { flex: none; }
```
